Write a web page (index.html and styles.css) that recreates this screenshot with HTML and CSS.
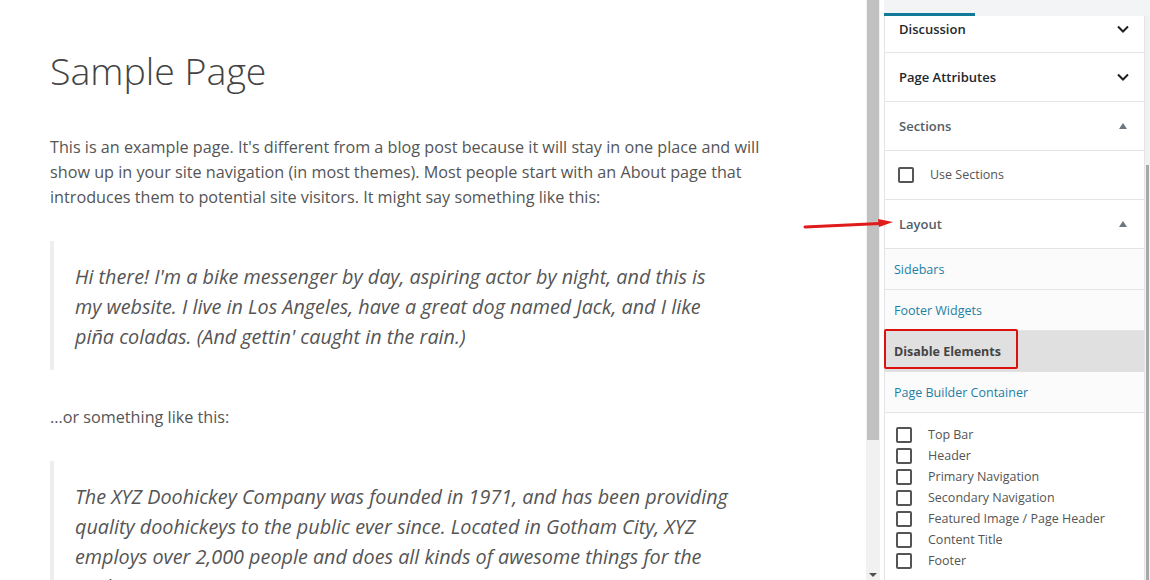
FILE: index.html
```html
<!DOCTYPE html>
<html lang="en">
<head>
  <meta charset="UTF-8" />
  <title>Sample Page</title>
  <link rel="stylesheet" href="styles.css">
</head>
<body>
  <div class="editor">
    <h1 class="page-title">Sample Page</h1>
    <p>This is an example page. It's different from a blog post because it will stay in one place and will show up in your site navigation (in most themes). Most people start with an About page that introduces them to potential site visitors. It might say something like this:</p>
    <blockquote>Hi there! I'm a bike messenger by day, aspiring actor by night, and this is my website. I live in Los Angeles, have a great dog named Jack, and I like piña coladas. (And gettin' caught in the rain.)</blockquote>
    <p>...or something like this:</p>
    <blockquote>The XYZ Doohickey Company was founded in 1971, and has been providing quality doohickeys to the public ever since. Located in Gotham City, XYZ employs over 2,000 people and does all kinds of awesome things for the Gotham community.</blockquote>
  </div>

  <div class="scrollbar">
    <div class="thumb"></div>
    <div class="track"></div>
    <div class="arrow-down"></div>
  </div>

  <div class="sidebar">
    <div class="tabs"><span class="tab-active"></span></div>
    <div class="panel">
      <div class="panel-head first">
        <span>Discussion</span>
        <svg class="chevron" viewBox="0 0 12 8"><path d="M1 1.5l5 5 5-5" /></svg>
      </div>
      <div class="panel-head">
        <span>Page Attributes</span>
        <svg class="chevron" viewBox="0 0 12 8"><path d="M1 1.5l5 5 5-5" /></svg>
      </div>
      <div class="panel-head open">
        <span>Sections</span>
        <span class="caret"></span>
      </div>
      <div class="panel-body">
        <label class="check"><span class="box"></span>Use Sections</label>
      </div>
      <div class="panel-head open">
        <span>Layout</span>
        <span class="caret"></span>
      </div>
      <ul class="meta-tabs">
        <li>Sidebars</li>
        <li>Footer Widgets</li>
        <li class="current">Disable Elements<span class="highlight"></span></li>
        <li>Page Builder Container</li>
      </ul>
      <div class="check-list">
        <label class="check"><span class="box"></span>Top Bar</label>
        <label class="check"><span class="box"></span>Header</label>
        <label class="check"><span class="box"></span>Primary Navigation</label>
        <label class="check"><span class="box"></span>Secondary Navigation</label>
        <label class="check"><span class="box"></span>Featured Image / Page Header</label>
        <label class="check"><span class="box"></span>Content Title</label>
        <label class="check"><span class="box"></span>Footer</label>
      </div>
    </div>
    <div class="edge"><div class="edge-bar"></div></div>
  </div>

  <!-- annotation arrow -->
  <svg class="pointer" viewBox="0 0 100 20">
    <path d="M5 13 L80 9.5" stroke="#e01b1b" stroke-width="3" stroke-linecap="round" fill="none" />
    <path d="M78 5 L93 8 L79 13 Z" fill="#e01b1b" />
  </svg>
</body>
</html>
```

FILE: styles.css
```css
:root {
  --text: #555555;
  --border: #e2e4e7;
  --link: #1d7fa5;
}
* { box-sizing: border-box; }
body {
  margin: 0;
  height: 580px;
  overflow: hidden;
  display: flex;
  font-family: 'Open Sans', 'Noto Sans', sans-serif;
  color: var(--text);
  background: #fff;
}

/* editor canvas */
.editor {
  flex: 0 0 866px;
  height: 580px;
  overflow: hidden;
  padding: 45px 0 0 50px;
}
.page-title {
  margin: 0 0 38px;
  font-size: 37.5px;
  font-weight: 300;
  line-height: 52px;
  color: #444;
}
.editor p {
  width: 728px;
  margin: 0;
  font-size: 16.2px;
  line-height: 25px;
}
.editor blockquote {
  width: 683px;
  margin: 31px 0 35px;
  padding: 21px 0 18px 21px;
  border-left: 4px solid #eeeeee;
  font-style: italic;
  font-size: 19.8px;
  line-height: 30px;
}

/* canvas scrollbar */
.scrollbar {
  flex: 0 0 14px;
  display: flex;
  flex-direction: column;
  background: #f1f1f1;
}
.thumb {
  height: 440px;
  margin: 0 1px;
  background: #c1c1c1;
}
.track { flex: 1; }
.arrow-down {
  align-self: center;
  width: 0;
  height: 4px;
  margin-bottom: 3px;
  border-left: 4px solid transparent;
  border-right: 4px solid transparent;
  border-top: 4px solid #505050;
}

/* settings sidebar */
.sidebar {
  flex: 1;
  display: grid;
  grid-template-columns: 1fr 5px;
  grid-template-rows: 16px 1fr;
  padding-left: 4px;
  background: #fff;
}
.tabs {
  grid-column: 1 / -1;
  background: #f3f4f5;
  display: flex;
  align-items: flex-end;
}
.tab-active {
  width: 91px;
  height: 3px;
  background: #11799a;
}
.panel {
  border-left: 1px solid var(--border);
  border-right: 1px solid var(--border);
  font-size: 12.5px;
}
.edge {
  background: #f1f1f1;
  padding-top: 149px;
}
.edge-bar {
  height: 100%;
  margin-left: 1px;
  width: 3px;
  background: #a8a8a8;
}

.panel-head {
  height: 49px;
  padding: 0 15px 0 14px;
  display: flex;
  align-items: center;
  justify-content: space-between;
  border-bottom: 1px solid var(--border);
  font-size: 13px;
  font-weight: 600;
  color: #23282d;
}
.panel-head.first {
  height: 37px;
  padding-bottom: 11px;
}
.panel-head.open { color: #555d66; }
.chevron {
  width: 12px;
  height: 8px;
  fill: none;
  stroke: #1e1e1e;
  stroke-width: 2;
}
.caret {
  width: 0;
  height: 0;
  margin-right: 2px;
  border-left: 4.5px solid transparent;
  border-right: 4.5px solid transparent;
  border-bottom: 6px solid #6c7781;
}

.check {
  display: flex;
  align-items: center;
  gap: 16px;
  line-height: 16px;
  color: var(--text);
}
.box {
  width: 16px;
  height: 16px;
  border: 2px solid #555;
  border-radius: 2px;
}
.panel-body {
  height: 49px;
  padding-left: 13px;
  display: flex;
  align-items: center;
  border-bottom: 1px solid var(--border);
}

.meta-tabs {
  list-style: none;
  margin: 0;
  padding: 0;
  background: #fbfbfb;
}
.meta-tabs li {
  position: relative;
  height: 41px;
  padding-left: 9px;
  display: flex;
  align-items: center;
  border-bottom: 1px solid var(--border);
  color: var(--link);
}
.meta-tabs li.current {
  background: #e0e0e0;
  color: #444;
  font-weight: 700;
  border-bottom-color: #e0e0e0;
}
.highlight {
  position: absolute;
  left: -1px;
  top: -2px;
  width: 134px;
  height: 40px;
  border: 2px solid #dd1010;
  border-radius: 2px;
}

.check-list {
  padding: 14px 0 0 11px;
  display: flex;
  flex-direction: column;
  gap: 5px;
}

.pointer {
  position: absolute;
  left: 800px;
  top: 214px;
  width: 100px;
  height: 20px;
}
```
